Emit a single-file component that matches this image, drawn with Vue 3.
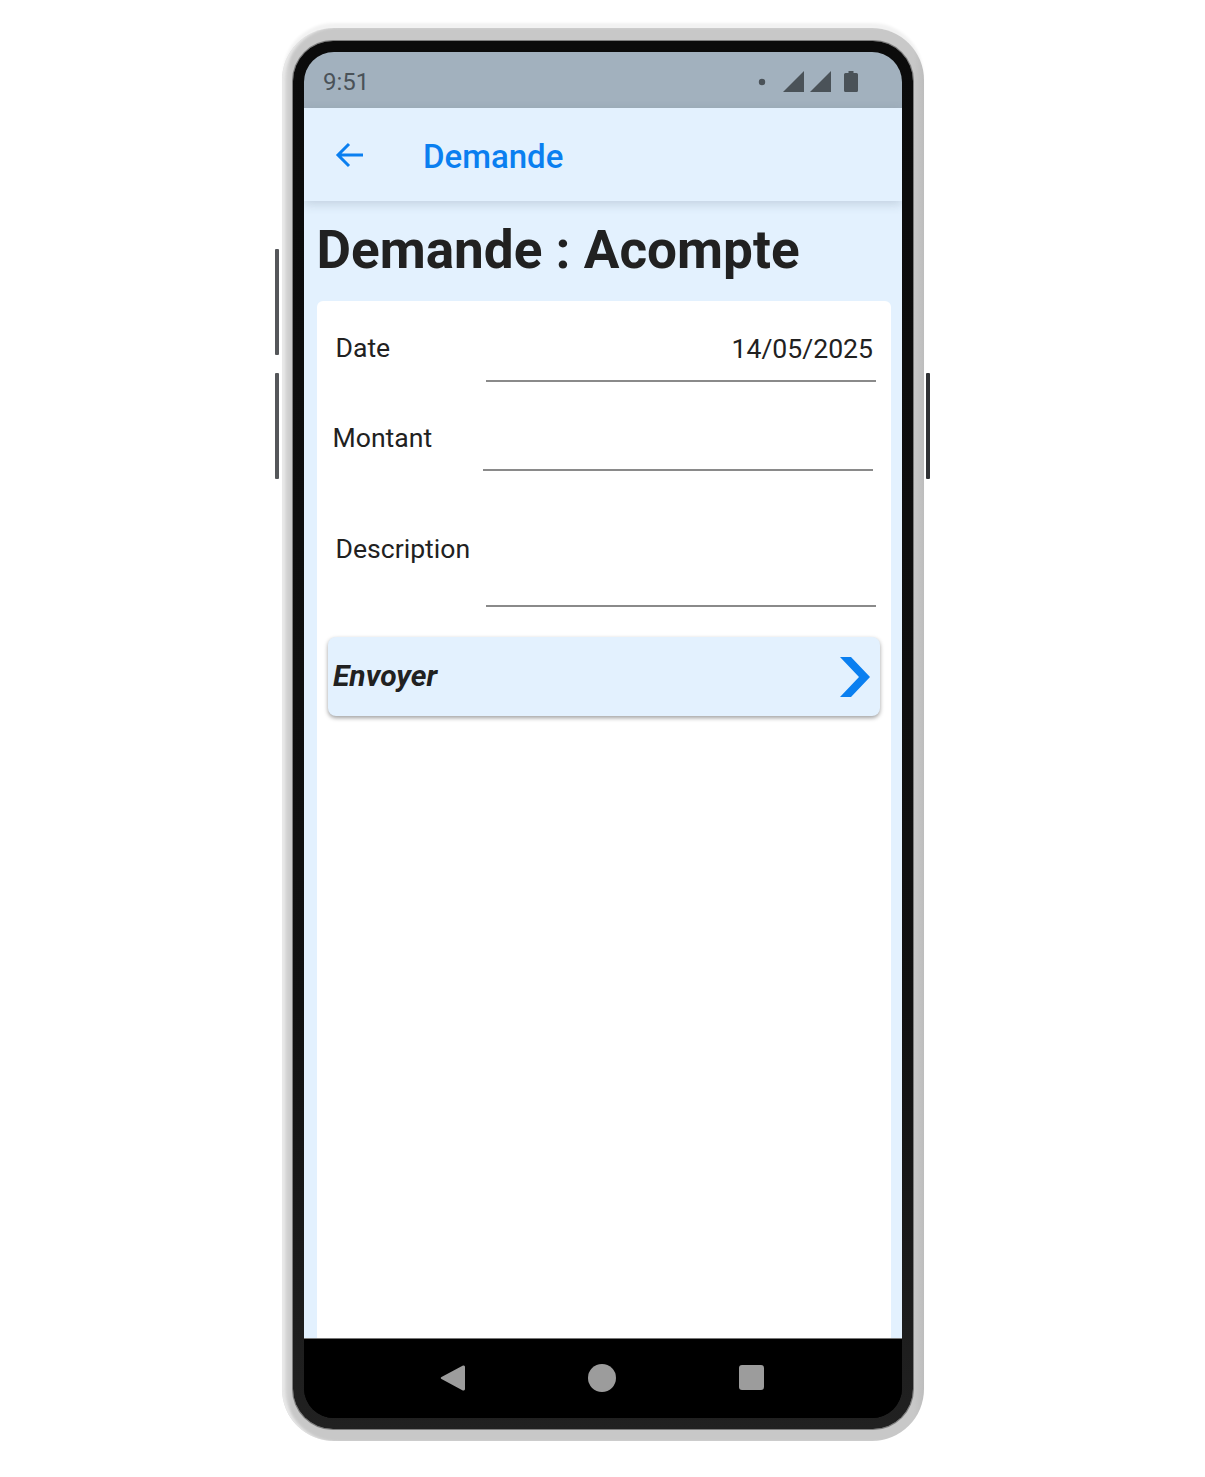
<script setup>
const rows = [
  { label: 'Date', value: '14/05/2025', cls: 'row-date' },
  { label: 'Montant', value: '', cls: 'row-amount' },
  { label: 'Description', value: '', cls: 'row-desc' },
]
</script>

<template>
  <div class="page">
    <div class="phone">
      <span class="side side-a"></span>
      <span class="side side-b"></span>
      <span class="side side-c"></span>
      <div class="bezel">
        <div class="screen">
          <div class="status">
            <span class="time">9:51</span>
            <div class="status-icons">
              <svg width="8" height="8" viewBox="0 0 8 8" class="dot"><circle cx="4" cy="4" r="3.2" fill="#4a5258"/></svg>
              <svg width="21" height="21" viewBox="0 0 21 21" class="sig"><path d="M21 0V21H0Z" fill="#4a5258"/></svg>
              <svg width="21" height="21" viewBox="0 0 21 21" class="sig sig-last"><path d="M21 0V21H0Z" fill="#4a5258"/></svg>
              <svg width="14" height="21" viewBox="0 0 14 21" class="bat"><path d="M4.5 0h5v2H12.5a1.500 1.500 0 0 1 1.500 1.500V19.500a1.500 1.500 0 0 1-1.500 1.500H1.500A1.500 1.500 0 0 1 0 19.500V3.500A1.500 1.500 0 0 1 1.500 2H4.500Z" fill="#4a5258"/></svg>
            </div>
          </div>
          <header class="appbar">
            <svg width="32" height="32" viewBox="0 0 32 32" class="back"><path d="M29 16H4M15 5 4 16l11 11" fill="none" stroke="#0a7ff0" stroke-width="3"/></svg>
            <span class="appbar-title">Demande</span>
          </header>
          <main class="content">
            <h1 class="title">Demande : Acompte</h1>
            <section class="card">
              <div v-for="r in rows" :key="r.label" class="row" :class="r.cls">
                <span class="label">{{ r.label }}</span>
                <div class="field">{{ r.value }}</div>
              </div>
              <div class="send">
                <span class="send-text">Envoyer</span>
                <svg width="30" height="40" viewBox="0 0 30 40"><path d="M0 0h11l19 20-19 20H0l19-20Z" fill="#0a7ff0"/></svg>
              </div>
            </section>
          </main>
          <nav class="navbar">
            <svg width="26" height="30" viewBox="0 0 26 30"><path d="M23 2.500a1.500 1.500 0 0 1 2 1.500V26a1.500 1.500 0 0 1-2.200 1.400L1.500 16a1.200 1.200 0 0 1 0-2Z" fill="#9c9c9c"/></svg>
            <span class="circle"></span>
            <span class="square"></span>
          </nav>
        </div>
      </div>
    </div>
  </div>
</template>

<style>
html, body { margin: 0; background: #fff; }
</style>

<style scoped>
.page {
  width: 1205px;
  height: 1477px;
  box-sizing: border-box;
  padding: 28px 0 0 282px;
  background: #fff;
  font-family: Roboto, "Liberation Sans", sans-serif;
  overflow: hidden;
}
.phone {
  position: relative;
  width: 642px;
  height: 1413px;
  box-sizing: border-box;
  padding: 13px 11px 12px;
  border-radius: 52px;
  background: linear-gradient(90deg, #dcdcdc 0, #c8c8c8 10px, #c8c8c8 632px, #bdbdbd 100%);
  box-shadow: 0 -6px 3px -1px #f2f2f2, inset 4px 0 3px -1px #e9e9e9;
}
.side { position: absolute; width: 4px; background: #55575a; border-radius: 1px; }
.side-a { left: -7px; top: 221px; height: 106px; }
.side-b { left: -7px; top: 345px; height: 106px; }
.side-c { right: -6px; top: 345px; height: 106px; background: #303235; }
.bezel {
  height: 100%;
  box-sizing: border-box;
  padding: 11px;
  border-radius: 40px;
  background: linear-gradient(180deg, #0b0b0b 0, #111 70%, #212121 100%);
  box-shadow: 0 0 0 1px #7d7d7d;
}
.screen {
  height: 100%;
  display: flex;
  flex-direction: column;
  border-radius: 30px;
  overflow: hidden;
  background: #000;
}
.status {
  flex: 0 0 56px;
  display: flex;
  align-items: center;
  justify-content: space-between;
  padding: 0 44px 0 19px;
  background: #a2b1be;
  color: #4a5258;
}
.time { font-size: 24px; margin-top: 4px; }
.status-icons { display: flex; align-items: center; margin-top: 3px; }
.dot { margin-right: 17px; }
.sig { margin-right: 6px; }
.sig-last { margin-right: 13px; }
.bat { margin-top: -1px; }
.appbar {
  position: relative;
  z-index: 1;
  flex: 0 0 93px;
  display: flex;
  align-items: center;
  padding-left: 30px;
  background: #e3f1fe;
  box-shadow: 0 3px 10px rgba(60, 80, 100, 0.2);
}
.appbar-title {
  margin-left: 57px;
  margin-top: 3px;
  font-size: 33px;
  font-weight: 500;
  color: #0a7ff0;
}
.content {
  flex: 1;
  display: flex;
  flex-direction: column;
  min-height: 0;
  padding: 0 11px 0 12.5px;
  background: #e3f1fe;
}
.title {
  margin: 0;
  height: 100px;
  line-height: 98px;
  font-size: 53.1px;
  font-weight: 700;
  color: #212121;
  white-space: nowrap;
}
.card {
  flex: 1;
  padding: 0 11px 0 10.5px;
  background: #fff;
  border-radius: 6px 6px 0 0;
}
.row { display: flex; color: #212121; font-size: 26.6px; }
.label { width: 159px; flex: none; padding-left: 8.5px; box-sizing: border-box; }
.field { flex: 1; text-align: right; border-bottom: 2px solid #8a8a8a; padding-right: 3px; }
.row-date { height: 81px; margin-right: 4px; }
.row-date .label { line-height: 93px; }
.row-date .field { line-height: 95px; }
.row-amount { height: 89px; margin-left: -3px; margin-right: 7px; }
.row-amount .label { line-height: 111px; }
.row-desc { height: 136px; margin-right: 4px; }
.row-desc .label { line-height: 156px; }
.send {
  height: 79px;
  margin: 30px 0 0 1px;
  box-sizing: border-box;
  display: flex;
  align-items: center;
  justify-content: space-between;
  padding: 0 10px 0 5px;
  background: #e3f1fe;
  border-radius: 8px;
  box-shadow: 0 2px 4px rgba(0, 0, 0, 0.38);
}
.send-text { font-size: 30px; font-weight: 700; font-style: italic; color: #212121; margin-top: -3px; }
.navbar {
  flex: 0 0 80px;
  display: flex;
  align-items: center;
  box-sizing: border-box;
  padding-left: 136px;
  padding-bottom: 2px;
  background: #000;
  border-top: 1px solid #777;
}
.circle { width: 28px; height: 28px; border-radius: 50%; background: #9c9c9c; margin-left: 122px; }
.square { width: 25px; height: 25px; border-radius: 3px; background: #9c9c9c; margin-left: 123px; }
</style>
